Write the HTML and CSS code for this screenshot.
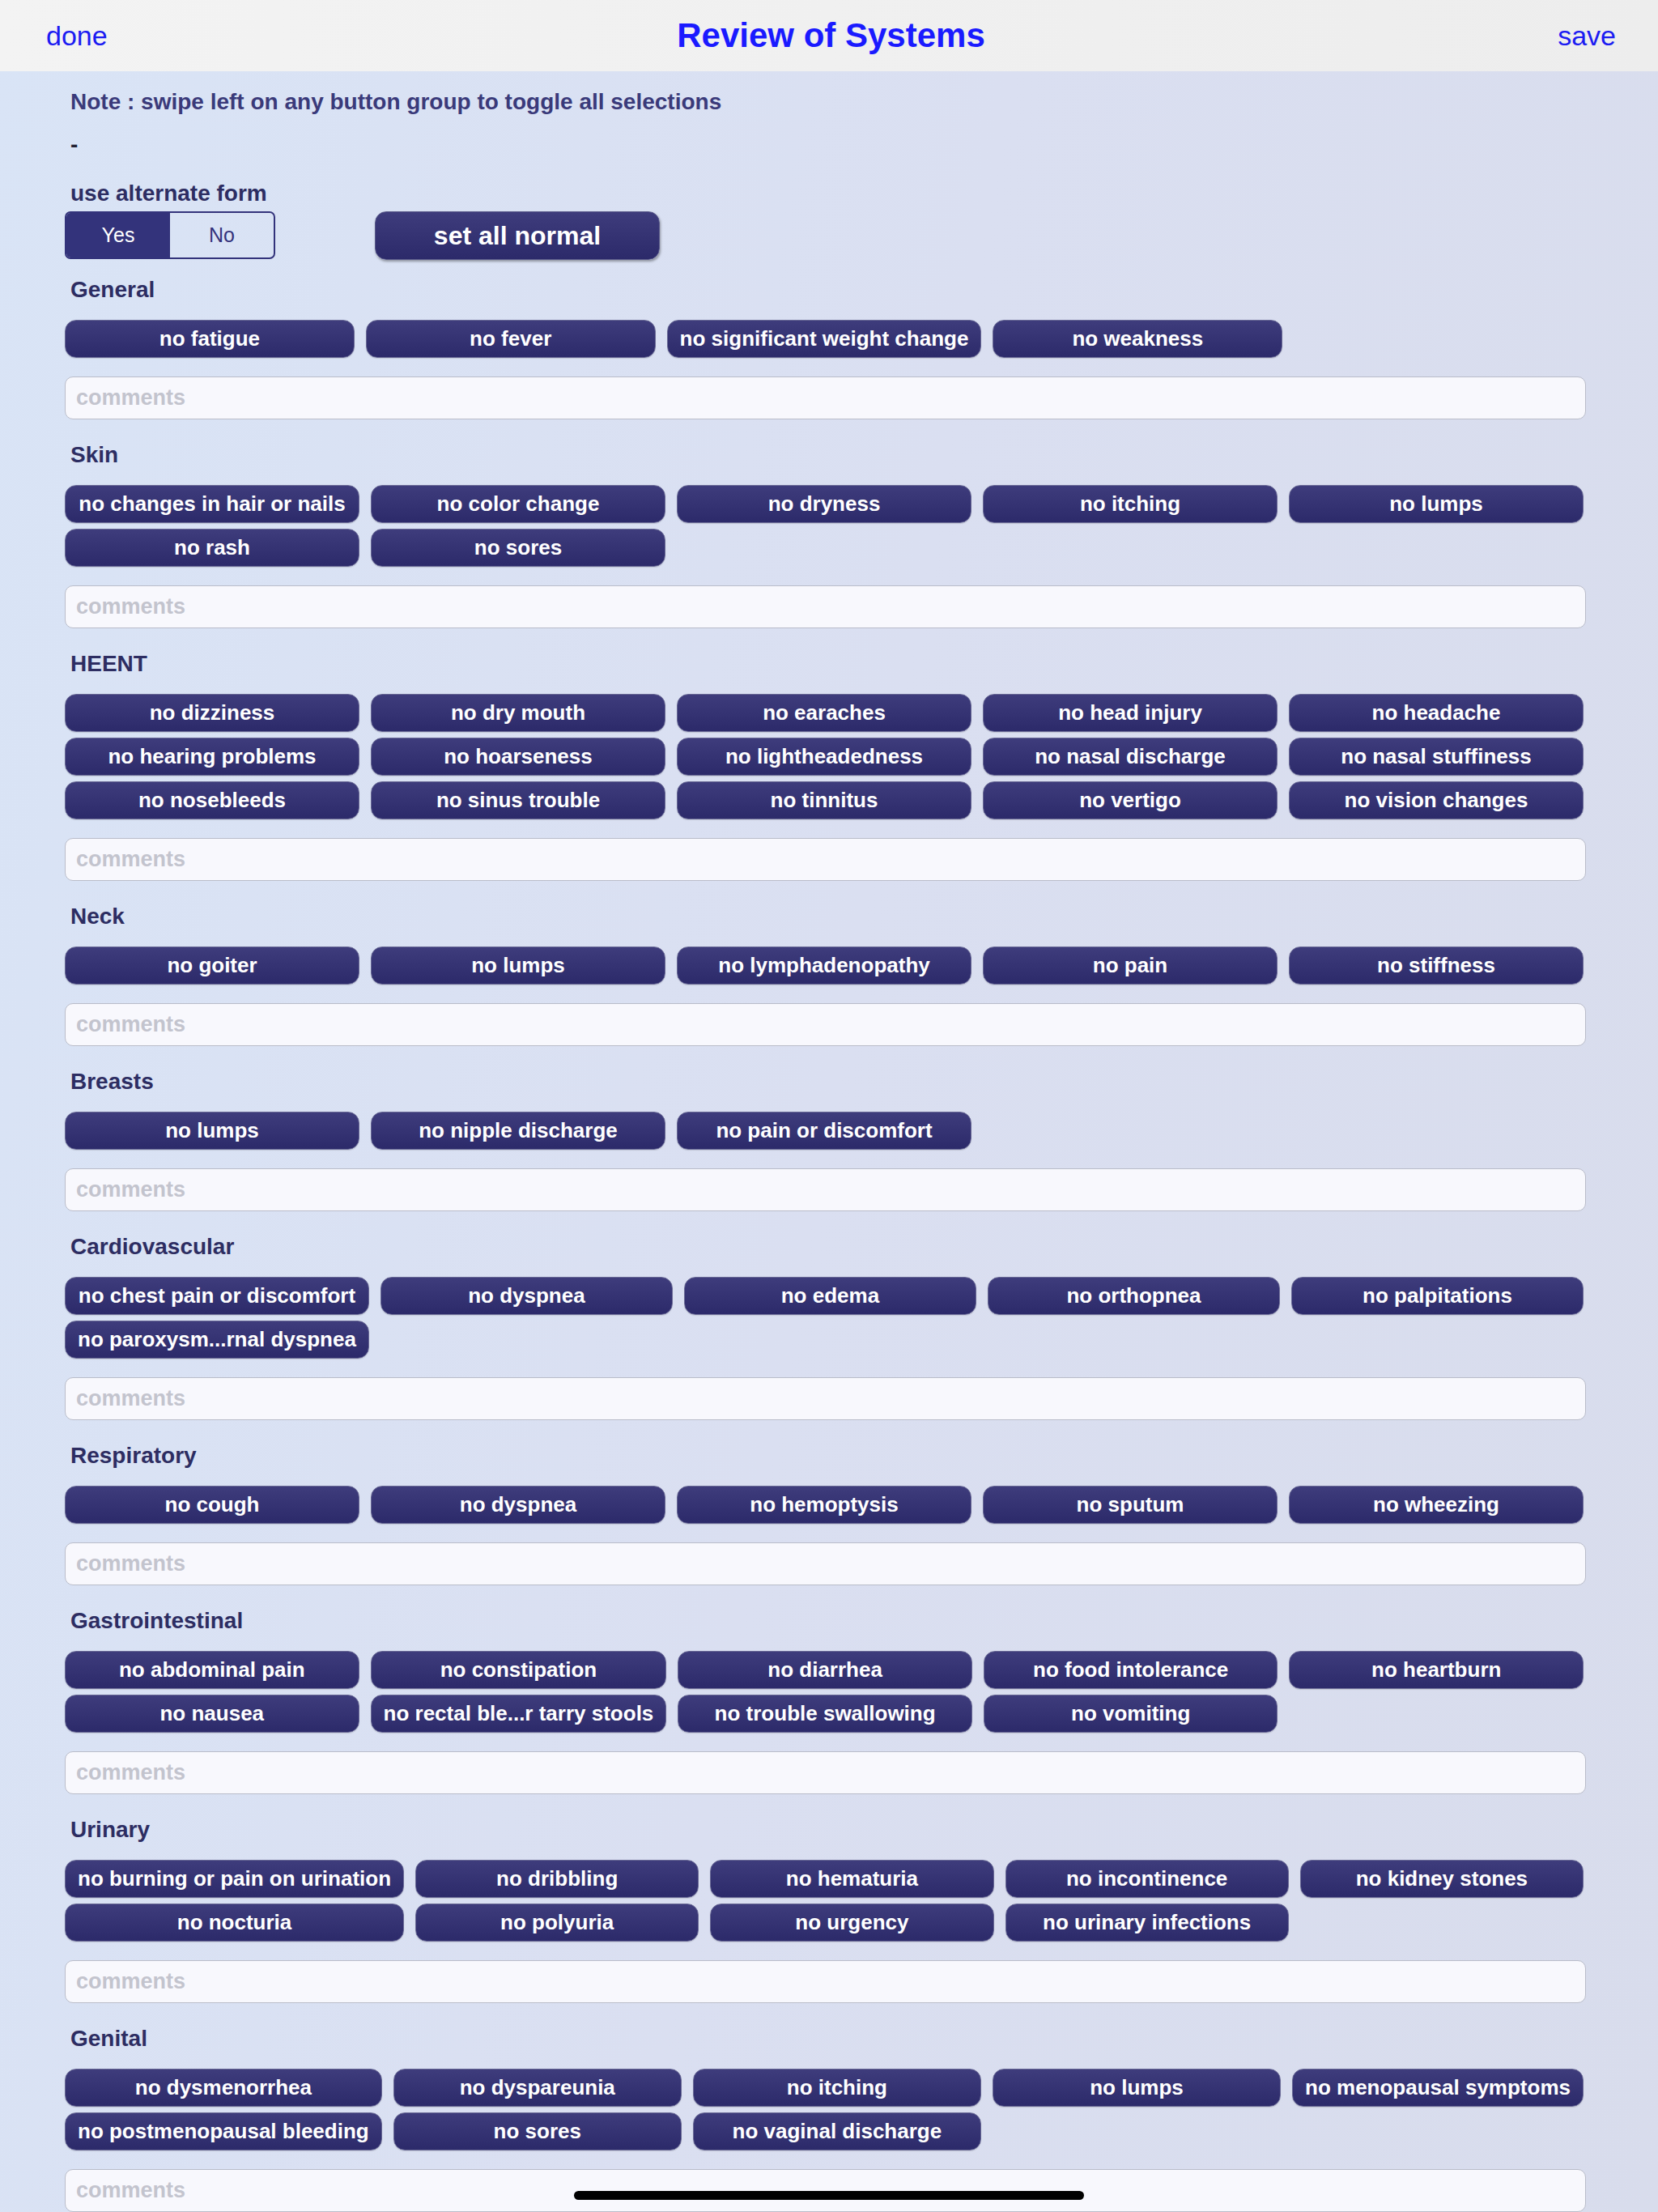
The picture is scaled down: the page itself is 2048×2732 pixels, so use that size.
FILE: index.html
```html
<!DOCTYPE html>
<html lang="en">
<head>
    <meta charset="UTF-8">
    <meta name="viewport" content="width=device-width, initial-scale=1.0">
    <title>Review of Systems</title>
    <link rel="stylesheet" href="styles.css">
</head>
<body>
    <div class="header">
        <a href="#" class="nav-link">done</a>
        <h1>Review of Systems</h1>
        <a href="#" class="nav-link save-link">save</a>
    </div>

    <div class="content">
        <p class="note">Note : swipe left on any button group to toggle all selections</p>
        <p class="dash">-</p>
        <p class="label">use alternate form</p>
        <div class="alt-row">
            <div class="segment">
                <span class="seg-item selected">Yes</span>
                <span class="seg-item">No</span>
            </div>
            <button type="button" class="normal-button">set all normal</button>
        </div>

        <div class="section">
            <p class="label">General</p>
            <div class="choices">
                <button type="button" class="choice">no fatigue</button>
                <button type="button" class="choice">no fever</button>
                <button type="button" class="choice">no significant weight change</button>
                <button type="button" class="choice">no weakness</button>
            </div>
            <input type="text" class="comments" placeholder="comments">
        </div>

        <div class="section">
            <p class="label">Skin</p>
            <div class="choices">
                <button type="button" class="choice">no changes in hair or nails</button>
                <button type="button" class="choice">no color change</button>
                <button type="button" class="choice">no dryness</button>
                <button type="button" class="choice">no itching</button>
                <button type="button" class="choice">no lumps</button>
                <button type="button" class="choice">no rash</button>
                <button type="button" class="choice">no sores</button>
            </div>
            <input type="text" class="comments" placeholder="comments">
        </div>

        <div class="section">
            <p class="label">HEENT</p>
            <div class="choices">
                <button type="button" class="choice">no dizziness</button>
                <button type="button" class="choice">no dry mouth</button>
                <button type="button" class="choice">no earaches</button>
                <button type="button" class="choice">no head injury</button>
                <button type="button" class="choice">no headache</button>
                <button type="button" class="choice">no hearing problems</button>
                <button type="button" class="choice">no hoarseness</button>
                <button type="button" class="choice">no lightheadedness</button>
                <button type="button" class="choice">no nasal discharge</button>
                <button type="button" class="choice">no nasal stuffiness</button>
                <button type="button" class="choice">no nosebleeds</button>
                <button type="button" class="choice">no sinus trouble</button>
                <button type="button" class="choice">no tinnitus</button>
                <button type="button" class="choice">no vertigo</button>
                <button type="button" class="choice">no vision changes</button>
            </div>
            <input type="text" class="comments" placeholder="comments">
        </div>

        <div class="section">
            <p class="label">Neck</p>
            <div class="choices">
                <button type="button" class="choice">no goiter</button>
                <button type="button" class="choice">no lumps</button>
                <button type="button" class="choice">no lymphadenopathy</button>
                <button type="button" class="choice">no pain</button>
                <button type="button" class="choice">no stiffness</button>
            </div>
            <input type="text" class="comments" placeholder="comments">
        </div>

        <div class="section">
            <p class="label">Breasts</p>
            <div class="choices">
                <button type="button" class="choice">no lumps</button>
                <button type="button" class="choice">no nipple discharge</button>
                <button type="button" class="choice">no pain or discomfort</button>
            </div>
            <input type="text" class="comments" placeholder="comments">
        </div>

        <div class="section">
            <p class="label">Cardiovascular</p>
            <div class="choices">
                <button type="button" class="choice">no chest pain or discomfort</button>
                <button type="button" class="choice">no dyspnea</button>
                <button type="button" class="choice">no edema</button>
                <button type="button" class="choice">no orthopnea</button>
                <button type="button" class="choice">no palpitations</button>
                <button type="button" class="choice">no paroxysm...rnal dyspnea</button>
            </div>
            <input type="text" class="comments" placeholder="comments">
        </div>

        <div class="section">
            <p class="label">Respiratory</p>
            <div class="choices">
                <button type="button" class="choice">no cough</button>
                <button type="button" class="choice">no dyspnea</button>
                <button type="button" class="choice">no hemoptysis</button>
                <button type="button" class="choice">no sputum</button>
                <button type="button" class="choice">no wheezing</button>
            </div>
            <input type="text" class="comments" placeholder="comments">
        </div>

        <div class="section">
            <p class="label">Gastrointestinal</p>
            <div class="choices">
                <button type="button" class="choice">no abdominal pain</button>
                <button type="button" class="choice">no constipation</button>
                <button type="button" class="choice">no diarrhea</button>
                <button type="button" class="choice">no food intolerance</button>
                <button type="button" class="choice">no heartburn</button>
                <button type="button" class="choice">no nausea</button>
                <button type="button" class="choice">no rectal ble...r tarry stools</button>
                <button type="button" class="choice">no trouble swallowing</button>
                <button type="button" class="choice">no vomiting</button>
            </div>
            <input type="text" class="comments" placeholder="comments">
        </div>

        <div class="section">
            <p class="label">Urinary</p>
            <div class="choices">
                <button type="button" class="choice">no burning or pain on urination</button>
                <button type="button" class="choice">no dribbling</button>
                <button type="button" class="choice">no hematuria</button>
                <button type="button" class="choice">no incontinence</button>
                <button type="button" class="choice">no kidney stones</button>
                <button type="button" class="choice">no nocturia</button>
                <button type="button" class="choice">no polyuria</button>
                <button type="button" class="choice">no urgency</button>
                <button type="button" class="choice">no urinary infections</button>
            </div>
            <input type="text" class="comments" placeholder="comments">
        </div>

        <div class="section">
            <p class="label">Genital</p>
            <div class="choices">
                <button type="button" class="choice">no dysmenorrhea</button>
                <button type="button" class="choice">no dyspareunia</button>
                <button type="button" class="choice">no itching</button>
                <button type="button" class="choice">no lumps</button>
                <button type="button" class="choice">no menopausal symptoms</button>
                <button type="button" class="choice">no postmenopausal bleeding</button>
                <button type="button" class="choice">no sores</button>
                <button type="button" class="choice">no vaginal discharge</button>
            </div>
            <input type="text" class="comments" placeholder="comments">
        </div>
    </div>

    <div class="home-indicator"></div>
</body>
</html>
```

FILE: styles.css
```css
html, body {
    margin: 0;
    padding: 0;
    height: 100%;
}
body {
    font-family: "Liberation Sans", Arial, sans-serif;
    background: linear-gradient(100deg, #d9e4f6 0%, #dadff1 50%, #d8dcec 100%);
    overflow: hidden;
    position: relative;
}
.header {
    height: 88px;
    display: grid;
    grid-template-columns: 1fr auto 1fr;
    align-items: center;
    padding: 0 52px 0 57px;
    background: linear-gradient(to right, #f3f3f3, #ededed);
}
.header h1 {
    margin: 0;
    font-size: 42px;
    font-weight: bold;
    color: #1a1aff;
}
.nav-link {
    font-size: 34px;
    color: #1c1cf2;
    text-decoration: none;
}
.save-link {
    justify-self: end;
}
.content {
    padding: 21px 89px 0 80px;
}
p {
    margin: 0;
}
.note, .dash, .label {
    font-size: 28px;
    font-weight: bold;
    line-height: 34px;
    padding-left: 7px;
}
.note {
    color: #3a3a7a;
}
.dash {
    margin-top: 19px;
    color: #222233;
}
.label {
    color: #2d2d62;
}
.dash + .label {
    margin-top: 26px;
}
.alt-row {
    display: flex;
    align-items: flex-start;
    gap: 123px;
    margin-top: 5px;
}
.segment {
    display: flex;
    width: 260px;
    height: 59px;
    box-sizing: border-box;
    border: 2px solid #33337b;
    border-radius: 7px;
    overflow: hidden;
}
.seg-item {
    flex: 1;
    display: flex;
    align-items: center;
    justify-content: center;
    font-size: 25px;
    color: #33337b;
}
.seg-item.selected {
    background-color: #33337b;
    color: white;
}
.normal-button {
    width: 352px;
    height: 60px;
    border: 1px solid #5a5a8a;
    border-radius: 14px;
    background: linear-gradient(#3e3c7c, #2c2a6a);
    box-shadow: 1px 2px 3px rgba(0, 0, 0, 0.35);
    color: white;
    font-family: inherit;
    font-size: 32px;
    font-weight: bold;
    padding: 0;
}
.section {
    display: flex;
    flex-direction: column;
    margin-top: 20px;
}
.section + .section {
    margin-top: 27px;
}
.choices {
    display: grid;
    grid-template-columns: repeat(5, 1fr);
    column-gap: 14px;
    row-gap: 7px;
    margin: 20px 3px 0 0;
}
.choice {
    height: 47px;
    padding: 0 15px;
    border: 1px solid #6a6a96;
    border-radius: 14px;
    background: linear-gradient(#3e3c7c, #2c2a6a);
    box-shadow: 0 1px 1px rgba(0, 0, 0, 0.12);
    color: white;
    font-family: inherit;
    font-size: 26px;
    font-weight: bold;
    white-space: nowrap;
}
.comments {
    margin-top: 23px;
    height: 53px;
    box-sizing: border-box;
    padding: 0 13px;
    border: 1px solid #b9bcc9;
    border-radius: 10px;
    background-color: #f8f8fd;
    font-family: inherit;
    font-size: 27px;
    font-weight: bold;
}
.comments::placeholder {
    color: #c3c4ce;
}
.home-indicator {
    position: absolute;
    left: 709px;
    top: 2706px;
    width: 630px;
    height: 11px;
    border-radius: 6px;
    background-color: #000;
}
```
